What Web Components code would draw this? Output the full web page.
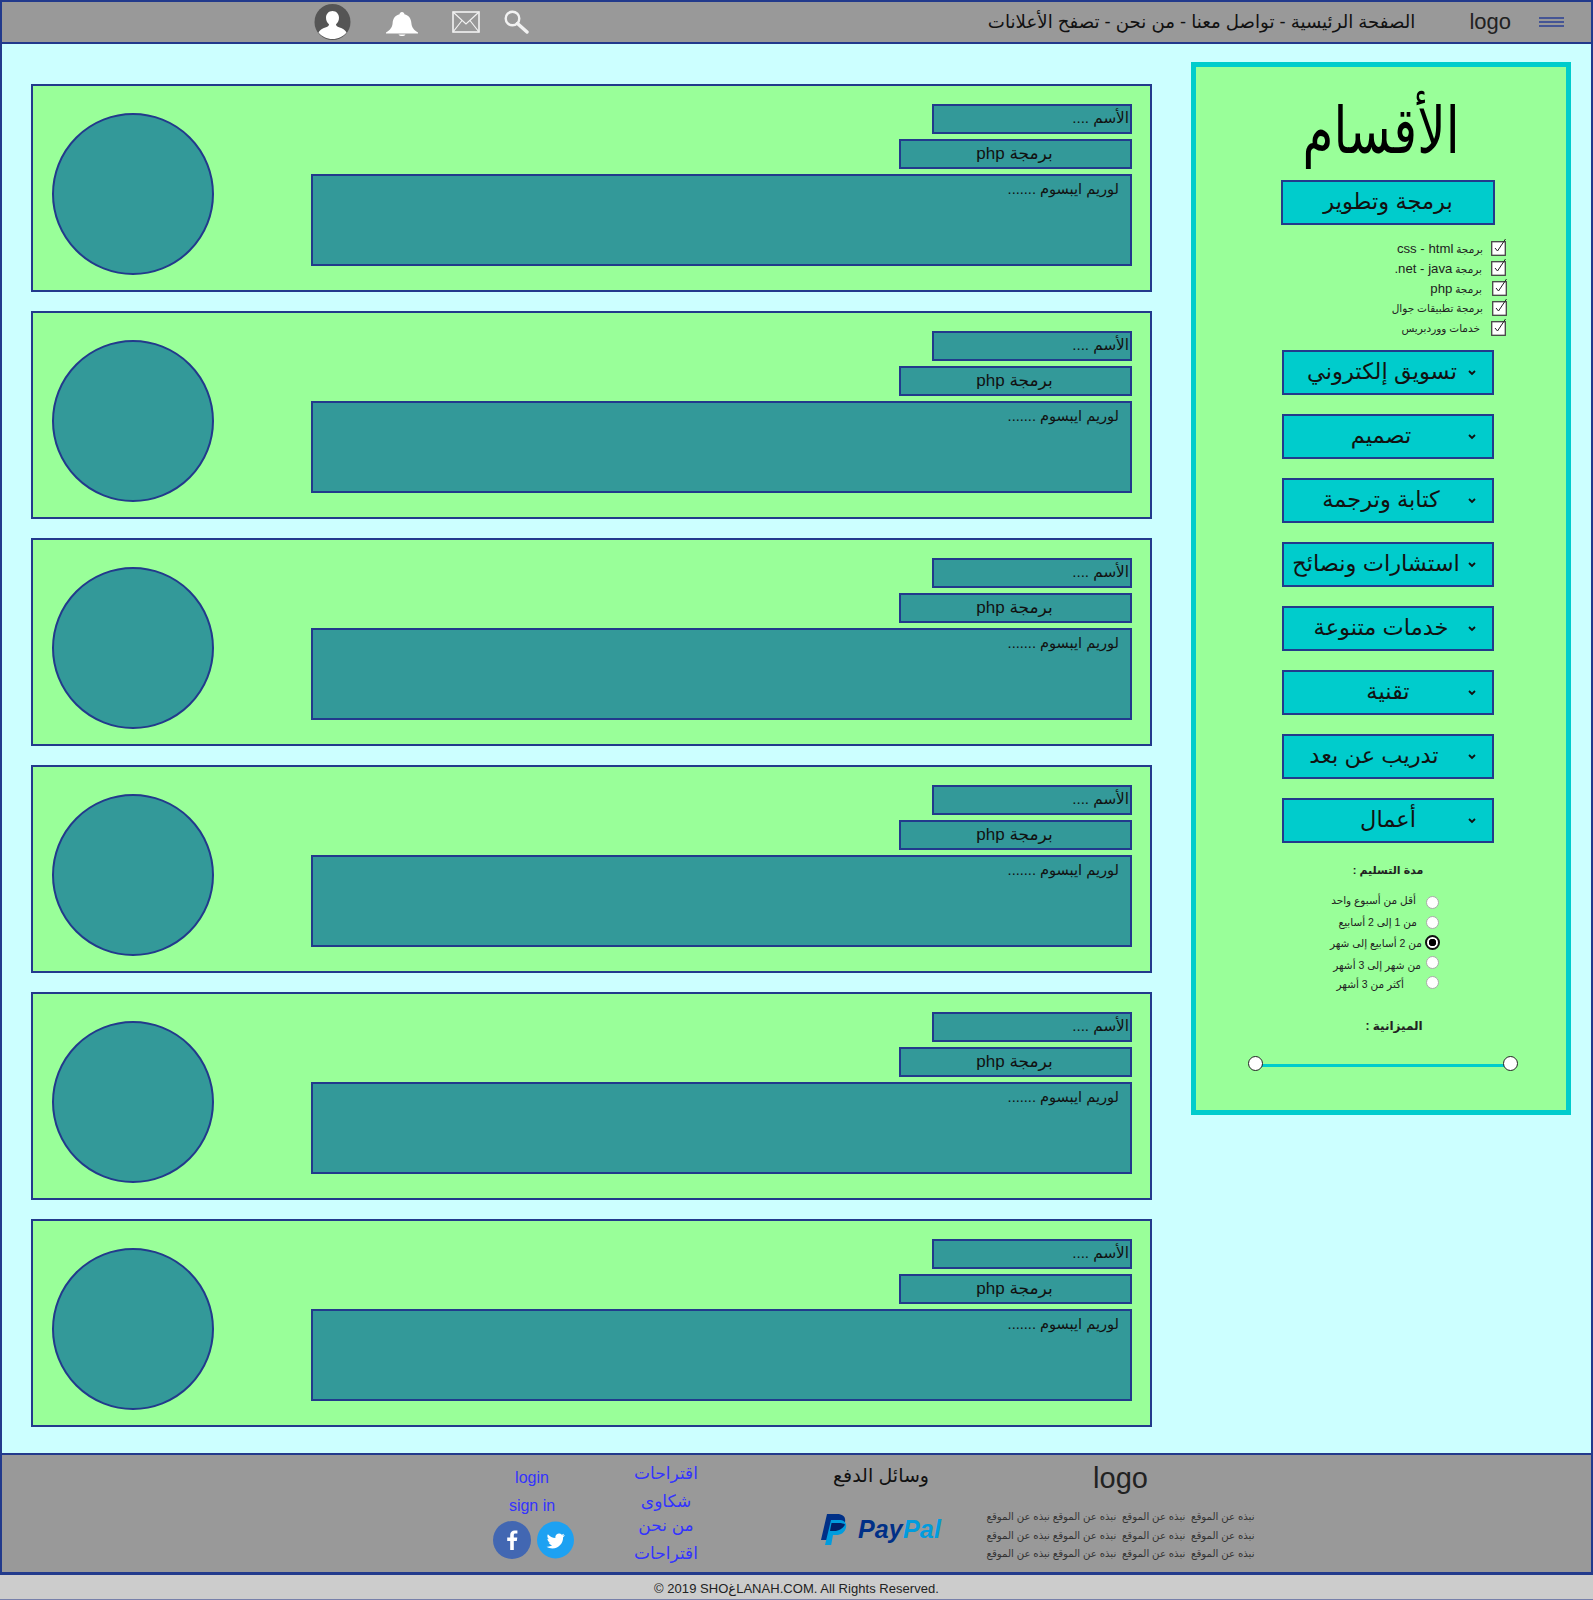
<!DOCTYPE html>
<html lang="ar"><head><meta charset="utf-8"><title>logo</title>
<style>
html,body{margin:0;padding:0;background:#ccffff}
body{width:1593px;font-family:"Liberation Sans","DejaVu Sans",sans-serif;color:#111}
</style></head><body>
<site-header></site-header>
<site-main>
  <div slot="cards">
    <job-card></job-card><job-card></job-card><job-card></job-card><job-card></job-card><job-card></job-card><job-card></job-card>
  </div>
  <side-panel slot="side"></side-panel>
</site-main>
<site-footer></site-footer>
<copy-bar></copy-bar>
<script>
const NAVY='#223a8c';
function def(name,html){
  customElements.define(name,class extends HTMLElement{
    connectedCallback(){
      if(this.shadowRoot)return;
      const r=this.attachShadow({mode:'open'});
      r.innerHTML=typeof html==='function'?html(this):html;
    }
  });
}
def('site-header',`<style>
:host{display:flex;align-items:center;box-sizing:border-box;height:44px;background:#999;border-top:2px solid ${NAVY};border-bottom:2px solid ${NAVY};border-left:2px solid ${NAVY};border-right:2px solid ${NAVY};padding-left:312px}
svg{display:block;flex:none}
nav{margin-left:auto;direction:rtl;font-size:18.200px;color:#111;white-space:nowrap}
.logo{font-size:22px;margin-left:54px;color:#222;line-height:1}
.burger{margin:0 27px 0 28px}
</style>
<svg width="38" height="38" viewBox="0 0 38 38" style="margin-top:-1px"><circle cx="18.500" cy="19" r="18" fill="#555"/><path d="M18.500 8c3.800 0 6.500 2.800 6.500 6.800 0 2.800-1.200 5-3 6.500 0 1.500 1 2.300 3 3 4 1.300 6.500 3 7.500 5.200-3.300 4-8.300 6.500-14 6.500S7.800 33.500 4.500 29.500c1-2.200 3.500-3.900 7.500-5.200 2-.7 3-1.500 3-3-1.800-1.500-3-3.700-3-6.500C12 10.800 14.700 8 18.500 8z" fill="#fff"/></svg>
<svg width="34" height="24" viewBox="0 0 34 24" style="margin-left:33px;margin-top:3px"><path d="M17 0c1.500 0 2.300 1 2.400 2.200 4.400 1 6.600 4.300 7 9 .4 4 2.100 6.400 6.600 9.300v.9H1v-.9c4.500-2.900 6.200-5.300 6.600-9.300.4-4.700 2.600-8 7-9C14.700 1 15.500 0 17 0z" fill="#fff"/><path d="M13.500 22.400h7c-.7 1.100-2 1.600-3.500 1.600s-2.800-.5-3.500-1.600z" fill="#fff"/></svg>
<svg width="28" height="22" viewBox="0 0 28 22" style="margin-left:33px"><rect x="1" y="1" width="26" height="20" fill="none" stroke="#f2f2f2" stroke-width="1.600"/><path d="M1 1l13 12L27 1M1 21l9-11.500M27 21l-9-11.500" fill="none" stroke="#f2f2f2" stroke-width="1.200"/></svg>
<svg width="25" height="24" viewBox="0 0 25 24" style="margin-left:24px"><circle cx="8.500" cy="8.500" r="6.800" fill="none" stroke="#f2f2f2" stroke-width="2.400"/><path d="M13.500 13.500l9.500 8.500" stroke="#f2f2f2" stroke-width="3.400" stroke-linecap="round"/></svg>
<nav>الصفحة الرئيسية - تواصل معنا - من نحن - تصفح الأعلانات</nav>
<div class="logo">logo</div>
<svg class="burger" width="25" height="10" viewBox="0 0 25 10"><path d="M0 1h25M0 5h25M0 9h25" stroke="#2a3f94" stroke-width="1.700"/></svg>`);

def('site-main',`<style>
:host{display:flex;box-sizing:border-box;height:1409px;background:#ccffff;border-left:2px solid ${NAVY};border-right:2px solid ${NAVY};align-items:flex-start}
.c{width:1121px;margin:40px 0 0 29px}
.s{margin:18px 0 0 39px}
</style><div class="c"><slot name="cards"></slot></div><div class="s"><slot name="side"></slot></div>`);

def('job-card',`<style>
:host{display:flex;box-sizing:border-box;width:1121px;height:208px;margin-bottom:19px;background:#99ff99;border:2px solid ${NAVY}}
.pic{flex:none;width:162px;height:162px;box-sizing:border-box;border-radius:50%;background:#339999;border:2px solid ${NAVY};margin:27px 0 0 19px}
.col{flex:1;display:flex;flex-direction:column;align-items:flex-end;padding:18px 18px 0 0;gap:5px;direction:ltr}
.b{box-sizing:border-box;background:#339999;border:2px solid ${NAVY};direction:rtl;color:#111;line-height:24px}
.n{width:200px;height:30px;padding-right:1px;font-size:15.200px}
.p{width:233px;height:30px;text-align:center;line-height:26px;font-size:17px;padding-right:2px}
.d{width:821px;height:92px;padding:1px 11px 0 0;font-size:14.600px}
</style><div class="pic"></div><div class="col"><div class="b n">الأسم ....</div><div class="b p">برمجة php</div><div class="b d">لوريم ايبسوم .......</div></div>`);

def('cat-button',el=>{const open=el.hasAttribute('open');return `<style>
:host{display:block;box-sizing:border-box;width:212px;height:45px;margin:0 72px 19px auto;background:#00cccc;border:2px solid ${NAVY};position:relative;direction:rtl;color:#111}
:host([open]){width:214px;margin:0 71px 0 auto}
.t{display:block;text-align:center;line-height:40px;font-size:22.500px;padding-right:var(--p,0);white-space:nowrap}
svg{position:absolute;left:184px;top:18px}
</style><span class="t"><slot></slot></span>${open?'':'<svg width="8" height="6" viewBox="0 0 8 6"><path d="M1 1l3 3 3-3" fill="none" stroke="#111" stroke-width="1.800"/></svg>'}`});

def('check-row',`<style>
:host{display:flex;justify-content:flex-start;align-items:center;direction:rtl;height:20px;color:#222;white-space:nowrap}
svg{flex:none;margin-right:var(--x,0px);margin-top:-2px}
.t{margin-right:var(--g,8px);font-size:10.500px}
</style><svg width="16" height="18" viewBox="0 0 16 18"><rect x=".7" y="3.700" width="13.600" height="13.600" fill="#fff" stroke="#444" stroke-width="1.300"/><path d="M4 10l2.500 3L14.500 1" fill="none" stroke="#222" stroke-width="1"/></svg><span class="t"><slot></slot></span>`);

def('radio-row',`<style>
:host{display:flex;align-items:center;direction:rtl;height:20px;font-size:10.500px;color:#222;white-space:nowrap}
i{flex:none;box-sizing:border-box;width:13px;height:13px;border-radius:50%;background:#fff;border:1px solid #aaa;margin-right:1px}
:host([on]) i{width:15px;height:15px;margin-right:0;border:2px solid #111;background:radial-gradient(circle,#000 0 3.500px,#fff 4px)}
.t{margin-right:var(--g,8px);position:relative;top:var(--o,0)}
</style><i></i><span class="t"><slot></slot></span>`);

def('range-slider',`<style>
:host{display:block;position:relative;width:270px;height:16px}
.l{position:absolute;left:8px;right:8px;top:8px;height:3px;background:#00cccc}
i{position:absolute;top:0;box-sizing:border-box;width:15px;height:15px;border-radius:50%;background:#fff;border:1px solid #222}
</style><div class="l"></div><i style="left:0"></i><i style="right:0"></i>`);

def('side-panel',`<style>
:host{display:block;box-sizing:border-box;width:380px;height:1053px;border:5px solid #00cccc;background:#99ff99;direction:rtl}
h1{margin:0;height:113px;font-weight:400;text-align:center;color:#000;padding-top:14px;box-sizing:border-box;line-height:100px}
h1 span{display:inline-block;font-size:50px;transform:scaleY(1.3)}
.checks{box-sizing:border-box;height:125px;padding:13px 59px 0 0}
.h{font-weight:700;color:#222;text-align:center}
.radios{padding:0 126px 0 0;margin-top:12px}
.h1{margin-top:-1px;height:19px;line-height:19px;padding-left:14px;font-size:11px}
.h2{margin-top:27px;padding-left:26px;font-size:12px}
range-slider{margin:23px 0 0 52px;direction:ltr}
.rw{direction:ltr}
</style>
<h1><span>الأقسام</span></h1>
<cat-button open>برمجة وتطوير</cat-button>
<div class="checks">
<check-row style="--g:8px">برمجة <span style="font-size:13.200px">css - html</span></check-row>
<check-row style="--g:9px">برمجة <span style="font-size:13.200px">net - java.</span></check-row>
<check-row style="--g:10px;--x:-1px">برمجة <span style="font-size:13.200px">php</span></check-row>
<check-row style="--g:9px;--x:-1px">برمجة تطبيقات جوال</check-row>
<check-row style="--g:11px">خدمات ووردبريس</check-row>
</div>
<cat-button style="--p:12px">تسويق إلكتروني</cat-button>
<cat-button style="--p:14px">تصميم</cat-button>
<cat-button style="--p:14px">كتابة وترجمة</cat-button>
<cat-button style="--p:24px">استشارات ونصائح</cat-button>
<cat-button style="--p:14px">خدمات متنوعة</cat-button>
<cat-button>تقنية</cat-button>
<cat-button style="--p:28px">تدريب عن بعد</cat-button>
<cat-button>أعمال</cat-button>
<div class="h h1">مدة التسليم :</div>
<div class="radios">
<radio-row style="--g:10px;--o:-2px">أقل من أسبوع واحد</radio-row>
<radio-row style="--g:9px">من 1 إلى 2 أسابيع</radio-row>
<radio-row on style="--g:3px;--o:1px">من 2 أسابيع إلى شهر</radio-row>
<radio-row style="--g:5px;--o:3px">من شهر إلى 3 أشهر</radio-row>
<radio-row style="--g:22px;--o:2px">أكثر من 3 أشهر</radio-row>
</div>
<div class="h h2">الميزانية :</div>
<div class="rw"><range-slider></range-slider></div>`);

def('site-footer',`<style>
:host{display:flex;box-sizing:border-box;height:122px;background:#999;border:solid ${NAVY};border-width:2px 2px 3px;padding-left:485px;color:#111}
a{display:block;color:#3333ff;text-decoration:none}
.c1{width:90px;text-align:center;font-size:16px;line-height:28px;padding-top:9px}
.soc{display:flex;gap:6px;justify-content:center;margin:1px 0 0 3px}
.soc svg{display:block}
.c2{width:100px;margin-left:39px;direction:rtl;text-align:center;font-size:17px}
.c2 a{height:26px;line-height:26px}
.c3{width:140px;margin-left:95px;text-align:center;direction:rtl;font-size:19px}
.c3 .t{line-height:24px;margin-top:9px}
.pp{display:flex;justify-content:center;align-items:center;gap:11px;margin-top:26px;direction:ltr}
.pp b{font:italic 700 25px/1 "Liberation Sans",sans-serif;color:#003087;letter-spacing:.2px}
.pp b span{color:#009cde}
.c4{width:275px;margin-left:32px;text-align:center}
.logo{font-size:29px;line-height:34px;margin-top:6px;color:#222}
.tx{direction:rtl;font-size:10.200px;line-height:18.500px;color:#333;margin-top:13px;white-space:nowrap}
</style>
<div class="c1"><a href="#">login</a><a href="#">sign in</a>
<div class="soc">
<svg width="38" height="38" viewBox="0 0 38 38"><circle cx="19" cy="19" r="19" fill="#4267b2"/><path d="M20.800 29V20h3l.5-3.500h-3.500v-2.200c0-1 .3-1.700 1.700-1.700h1.900V9.500c-.3 0-1.400-.1-2.700-.1-2.700 0-4.500 1.600-4.500 4.600v2.500h-3V20h3v9z" fill="#fff"/></svg>
<svg width="37" height="38" viewBox="0 0 37 38"><circle cx="18.500" cy="19" r="18.500" fill="#1da1f2"/><g transform="translate(3.500 4) scale(.83)"><path d="M29 12.200c-.8.300-1.600.6-2.500.7.900-.5 1.600-1.400 1.900-2.400-.8.500-1.800.9-2.700 1.100-1.700-1.800-4.600-1.900-6.400-.2-1.200 1.100-1.700 2.800-1.300 4.300-3.500-.2-6.900-1.900-9.100-4.600-1.200 2-.6 4.700 1.400 6-.7 0-1.400-.2-2-.6 0 2.200 1.500 4.100 3.600 4.500-.7.200-1.400.2-2 .1.600 1.800 2.300 3.100 4.200 3.100-1.900 1.500-4.400 2.200-6.800 1.900 2.100 1.300 4.500 2.100 7 2.100 8.400 0 13.200-7.100 12.900-13.500.9-.6 1.700-1.400 2.300-2.300z" fill="#fff"/></g></svg>
</div></div>
<div class="c2"><a href="#" style="margin-top:6px;height:28px">اقتراحات</a><a href="#" style="height:24px">شكاوى</a><a href="#" style="height:28px">من نحن</a><a href="#">اقتراحات</a></div>
<div class="c3"><div class="t">وسائل الدفع</div>
<div class="pp"><svg width="26" height="31" viewBox="0 0 26 31"><path d="M6 0h10c6 0 9 3 8 8-1 6-6 9-11 9H9L7 26H0z" fill="#003087"/><path d="M10 6h8c5 0 8 2.500 7 7.500-1 5-5 7.500-10 7.500h-3l-1.800 10H4z" fill="#009cde"/><path d="M9 17h4c5 0 9-2.500 11-6.500-1.500-1-3.500-1.500-6-1.500h-7.500z" fill="#012169"/></svg><b>Pay<span>Pal</span></b></div></div>
<div class="c4"><div class="logo">logo</div>
<div class="tx">نبذه عن الموقع&nbsp; نبذه عن الموقع&nbsp; نبذه عن الموقع نبذه عن الموقع<br>نبذه عن الموقع&nbsp; نبذه عن الموقع&nbsp; نبذه عن الموقع نبذه عن الموقع<br>نبذه عن الموقع&nbsp; نبذه عن الموقع&nbsp; نبذه عن الموقع نبذه عن الموقع</div></div>`);

def('copy-bar',`<style>
:host{display:block;box-sizing:border-box;height:25px;background:#ccc;border-bottom:1px solid #7780aa;text-align:center;font-size:13px;line-height:28px;color:#222;letter-spacing:.04px;unicode-bidi:plaintext}
</style>© 2019 SHOغLANAH.COM. All Rights Reserved.`);
</script>
</body></html>
